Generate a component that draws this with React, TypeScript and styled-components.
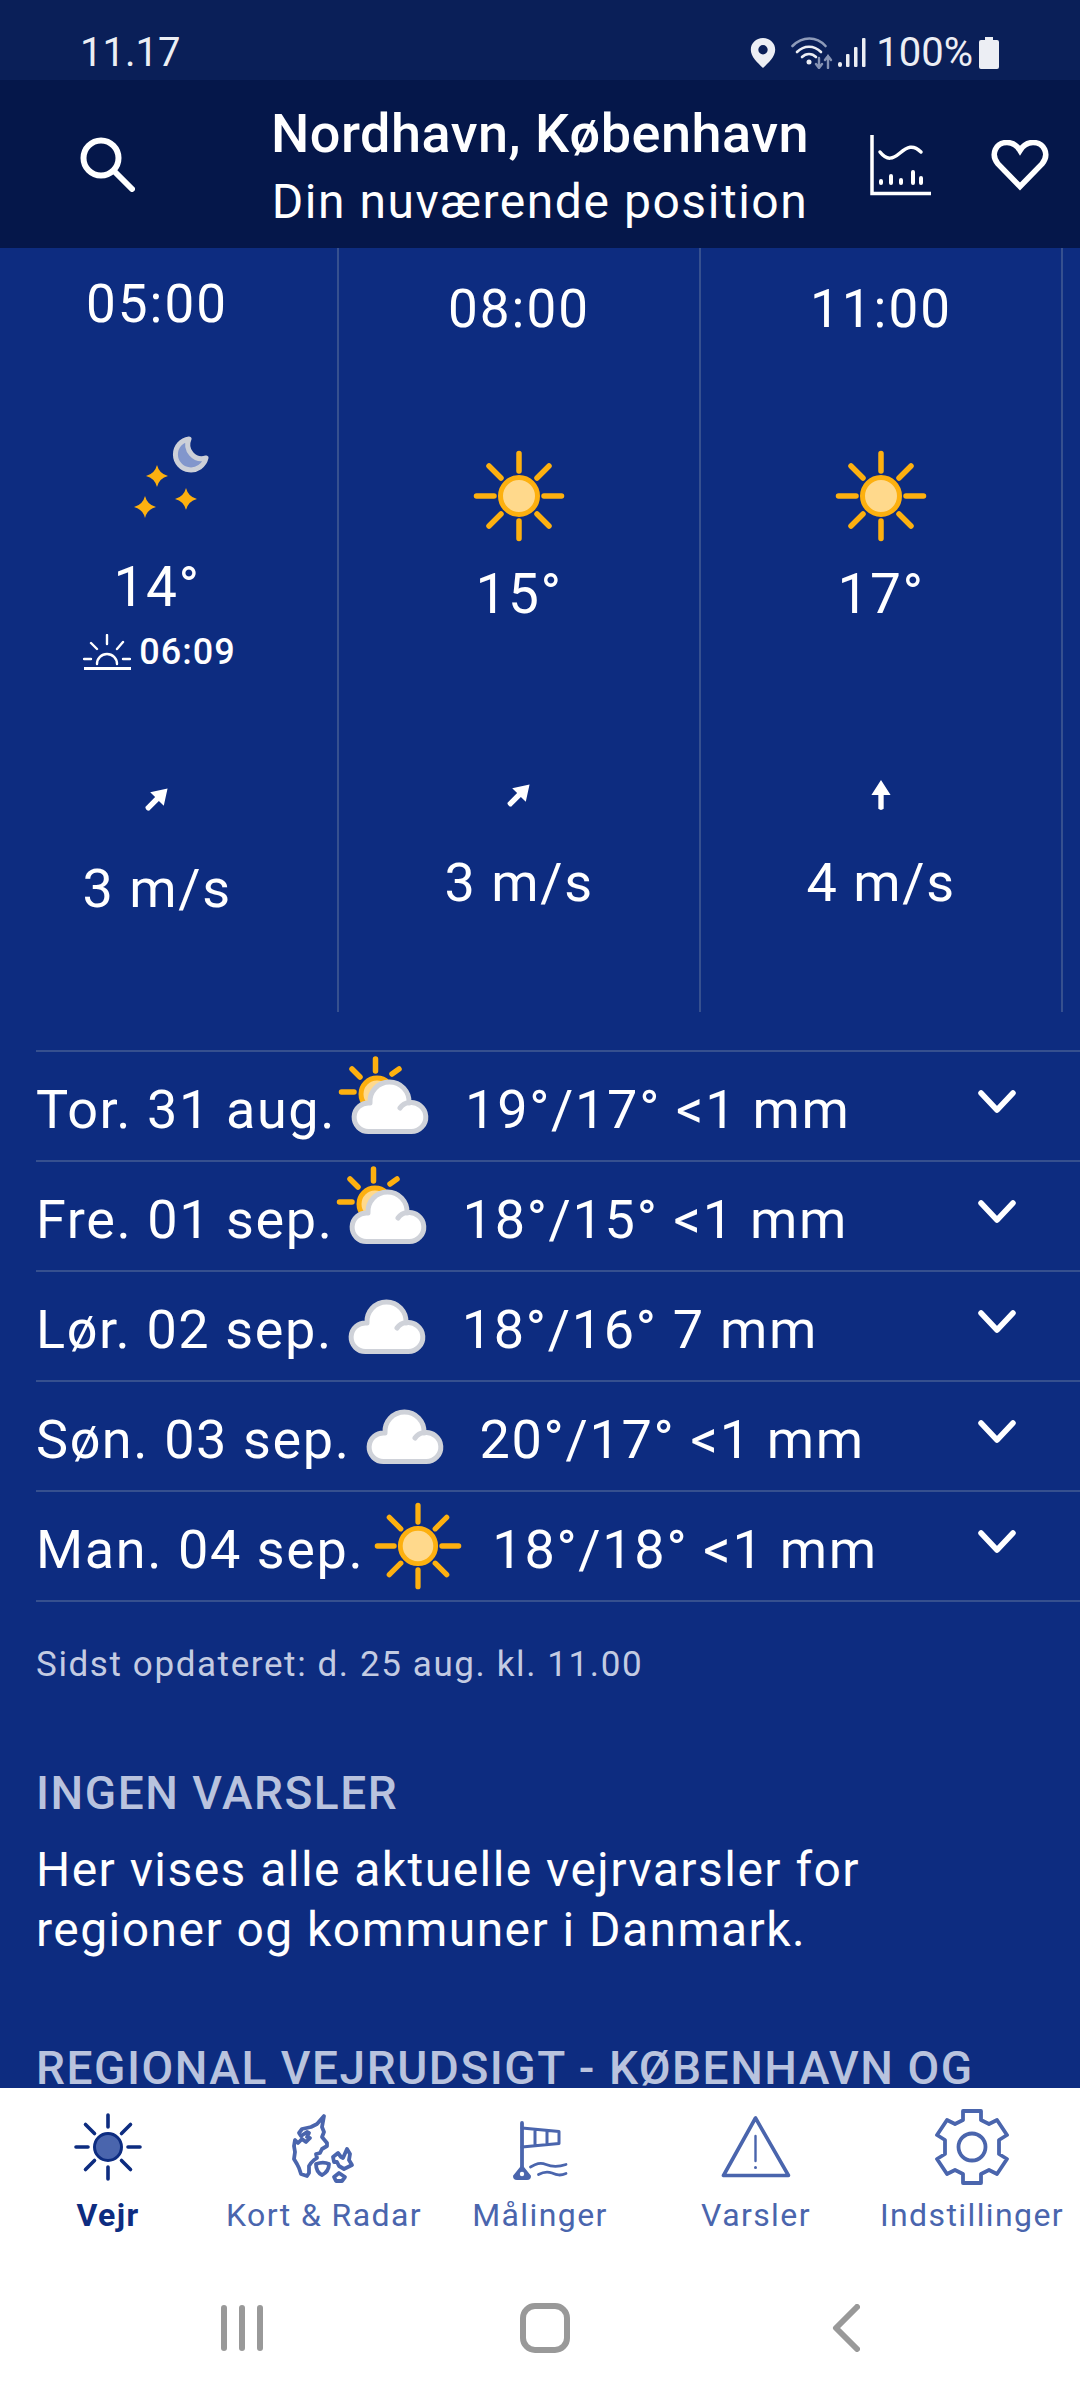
import React from "react";
import styled, { createGlobalStyle } from "styled-components";

const Global = createGlobalStyle`
  html, body { margin: 0; padding: 0; background: #0d2c80; }
  #root { width: 1080px; height: 2400px; overflow: hidden; }
  * { box-sizing: border-box; }
`;

const Page = styled.div`
  width: 1080px;
  height: 2400px;
  display: flex;
  flex-direction: column;
  background: #0d2c80;
  color: #fff;
  font-family: Roboto, "Liberation Sans", sans-serif;
  overflow: hidden;
`;

const StatusBar = styled.div`
  height: 80px;
  flex: none;
  background: #0a1f58;
  display: flex;
  align-items: center;
  padding: 25px 81px 0 80px;
  color: #eceef4;
  font-size: 40px;
  letter-spacing: 0;
`;

const StatusRight = styled.div`
  margin-left: auto;
  display: flex;
  align-items: center;
`;

const StatusPercent = styled.span`
  margin-left: 10px;
  letter-spacing: 0;
  font-size: 40px;
`;

const Header = styled.header`
  height: 168px;
  flex: none;
  background: #05174a;
  display: flex;
  align-items: center;
`;

const SearchSlot = styled.div`
  width: 240px;
  padding-left: 79px;
  flex: none;
  display: flex;
`;

const HeaderTitles = styled.div`
  width: 600px;
  padding-top: 9px;
  text-align: center;
  flex: none;
`;

const Title = styled.div`
  font-size: 54px;
  font-weight: 500;
  line-height: 64px;
  letter-spacing: 0.5px;
  white-space: nowrap;
`;

const Subtitle = styled.div`
  margin-top: 3px;
  font-size: 48px;
  line-height: 66px;
  letter-spacing: 1.55px;
  white-space: nowrap;
`;

const HeaderIcons = styled.div`
  display: flex;
  align-items: center;
  margin-left: 29px;
  padding-top: 4px;
  gap: 60px;
`;

const Main = styled.main`
  flex: 1;
  min-height: 0;
  overflow: hidden;
`;

const HourStrip = styled.section`
  display: flex;
  height: 764px;
  margin-left: -23px;
`;

const HourColumn = styled.div<{ $first?: boolean }>`
  flex: none;
  width: 362px;
  border-right: 2px solid #36508f;
  display: flex;
  flex-direction: column;
  align-items: center;
  padding-top: ${(p) => (p.$first ? 29 : 34)}px;
`;

const HourTime = styled.div`
  font-size: 53px;
  line-height: 54px;
  letter-spacing: 2px;
`;

const IconSlot = styled.div<{ $first?: boolean }>`
  margin-top: ${(p) => (p.$first ? 100 : 111)}px;
  margin-left: ${(p) => (p.$first ? 30 : 0)}px;
  height: 98px;
  display: flex;
  align-items: center;
  justify-content: center;
`;

const Temp = styled.div<{ $first?: boolean }>`
  margin-top: ${(p) => (p.$first ? 27 : 18)}px;
  font-size: 55px;
  line-height: 62px;
  letter-spacing: 1.5px;
`;

const SunriseRow = styled.div`
  margin-top: 10px;
  margin-left: 5px;
  height: 48px;
  display: flex;
  align-items: center;
  gap: 8px;
  font-size: 36px;
  font-weight: 500;
  letter-spacing: 1px;
`;

const WindArrow = styled.div<{ $first?: boolean }>`
  margin-top: ${(p) => (p.$first ? 107 : 154)}px;
  height: 32px;
  display: flex;
  align-items: center;
  justify-content: center;
`;

const WindHead = styled.svg<{ $rotate: number }>`
  transform: rotate(${(p) => p.$rotate}deg);
`;

const WindText = styled.div<{ $first?: boolean }>`
  margin-top: ${(p) => (p.$first ? 43 : 41)}px;
  font-size: 54px;
  line-height: 62px;
  letter-spacing: 1.6px;
`;

const DayList = styled.section`
  margin: 0 0 0 36px;
  padding-top: 38px;
`;

const DayRow = styled.div<{ $last?: boolean }>`
  height: ${(p) => (p.$last ? 112 : 110)}px;
  padding-top: 6px;
  border-top: 2px solid #36508f;
  ${(p) => (p.$last ? "border-bottom: 2px solid #36508f;" : "")}
  display: flex;
  align-items: center;
  font-size: 54px;
  letter-spacing: 1.7px;
  white-space: nowrap;
`;

const DayName = styled.span`
  flex: none;
  letter-spacing: 1.6px;
`;

const DayIcon = styled.span<{ $gap: number; $right: number; $lift: number }>`
  display: flex;
  flex: none;
  margin: ${(p) => -p.$lift}px ${(p) => p.$right}px 0 ${(p) => p.$gap}px;
`;

const DayValues = styled.span`
  flex: none;
`;

const Chevron = styled.span`
  margin-left: auto;
  margin-right: 64px;
  margin-top: -14px;
  display: flex;
`;

const Updated = styled.div`
  padding: 41px 36px 0;
  font-size: 35px;
  line-height: 44px;
  letter-spacing: 1.6px;
  color: #c3cbe2;
`;

const SectionHead = styled.h2<{ $top: number }>`
  margin: ${(p) => p.$top}px 0 0;
  padding: 0 36px;
  font-size: 46px;
  font-weight: 500;
  line-height: 52px;
  letter-spacing: 1.55px;
  color: #b9c3de;
  white-space: nowrap;
`;

const Body = styled.p`
  margin: 21px 0 0;
  padding: 0 36px;
  font-size: 48px;
  line-height: 60px;
  letter-spacing: 1.45px;
`;

const TabBar = styled.nav`
  flex: none;
  height: 168px;
  background: #fff;
  display: grid;
  grid-template-columns: repeat(5, 216px);
  padding-top: 17px;
`;

const Tab = styled.div<{ $active?: boolean }>`
  display: flex;
  flex-direction: column;
  align-items: center;
  color: ${(p) => (p.$active ? "#0d2c80" : "#4a65ad")};
  font-size: 32px;
  font-weight: ${(p) => (p.$active ? 700 : 400)};
  letter-spacing: 1.4px;
  white-space: nowrap;
`;

const TabIcon = styled.div`
  height: 84px;
  display: flex;
  align-items: center;
  justify-content: center;
`;

const TabLabel = styled.div`
  margin-top: 6px;
  line-height: 40px;
`;

const SystemBar = styled.div`
  flex: none;
  height: 144px;
  background: #fff;
  display: grid;
  grid-template-columns: repeat(3, 298px);
  align-items: center;
  padding-left: 93px;
`;

const SysSlot = styled.div<{ $nudge?: number }>`
  display: flex;
  justify-content: center;
  padding-left: ${(p) => p.$nudge ?? 0}px;
`;

const WifiSvg = styled.svg`
  margin-left: 15px;
`;

const SignalSvg = styled.svg`
  margin-left: 5px;
`;

const BatterySvg = styled.svg`
  margin-left: 6px;
`;

const Sun = ({ size = 92 }: { size?: number }) => (
  <svg width={size} height={size} viewBox="0 0 92 92" fill="none">
    <g stroke="#fdb00f" strokeWidth="5.5" strokeLinecap="round">
      <path d="M46 3.500V21M46 71v17.500M3.500 46H21M71 46h17.500M16 16l12 12M64 64l12 12M16 76l12-12M64 28l12-12" />
    </g>
    <circle cx="46" cy="46" r="18.5" fill="#ffd98c" stroke="#fdb00f" strokeWidth="5" />
  </svg>
);

const Cloud = ({ sun }: { sun?: boolean }) => (
  <svg width="96" height="84" viewBox="0 0 96 84" fill="none">
    {sun && (
      <g>
        <path d="M39.500 3v12M5.500 36h12.500M16 13l8 8M56 18l7-5" stroke="#fdb00f" strokeWidth="5.500" strokeLinecap="round" />
        <circle cx="41" cy="38" r="16" fill="#ffd98c" stroke="#fdb00f" strokeWidth="5" />
      </g>
    )}
    <path
      d="M33 75.500H75A14.450 14.450 0 1 0 73 46.800A19.550 19.550 0 1 0 34 47A14.300 14.300 0 1 0 33 75.500Z"
      fill="#fff"
      stroke="#cfd2d9"
      strokeWidth="5"
      strokeLinejoin="round"
    />
    <path d="M64 52c2-3 5-5 9-5.200" stroke="#cfd2d9" strokeWidth="5" strokeLinecap="round" />
  </svg>
);

const Star = ({ x, y, r }: { x: number; y: number; r: number }) => (
  <path
    d={`M${x} ${y - r}Q${x + r * 0.2} ${y - r * 0.2} ${x + r} ${y}Q${x + r * 0.2} ${y + r * 0.2} ${x} ${y + r}Q${x - r * 0.2} ${y + r * 0.2} ${x - r} ${y}Q${x - r * 0.2} ${y - r * 0.2} ${x} ${y - r}Z`}
    fill="#fdb00f"
  />
);

const Night = () => (
  <svg width="84" height="88" viewBox="0 0 84 88" fill="none">
    <path
      d="M59 3A15.500 15.500 0 1 0 76 22A14 14 0 0 1 59 3Z"
      fill="#8296cc"
      stroke="#cdd0d8"
      strokeWidth="5"
      strokeLinejoin="round"
    />
    <Star x={27} y={40} r={11} />
    <Star x={15} y={71} r={11} />
    <Star x={56} y={63} r={11} />
  </svg>
);

const Sunrise = () => (
  <svg width="48" height="36" viewBox="0 0 48 36" fill="none" stroke="#fff" strokeWidth="2.400" strokeLinecap="round">
    <path d="M1 34.500h47" strokeWidth="2.800" strokeLinecap="butt" />
    <path d="M14 30a10 10 0 0 1 20 0" />
    <path d="M24 1v9M8 9l6 6M40 8l-6 7M1 25h7M40 25h7" />
  </svg>
);

const Arrow = ({ rotate }: { rotate: number }) => (
  <WindHead $rotate={rotate} width="32" height="32" viewBox="0 0 30 30">
    <path d="M15 1L24 15H17.500V28Q15 30 12.500 28V15H6Z" fill="#fff" />
  </WindHead>
);

const ChevronIcon = () => (
  <svg width="38" height="26" viewBox="0 0 38 26" fill="none" stroke="#fff" strokeWidth="5.500" strokeLinecap="round" strokeLinejoin="round">
    <path d="M3 4l16 17L35 4" />
  </svg>
);

const SearchIcon = () => (
  <svg width="56" height="56" viewBox="0 0 56 56" fill="none" stroke="#fff" strokeWidth="6">
    <circle cx="22" cy="22" r="17.500" />
    <path d="M35 35l18 18" strokeLinecap="round" />
  </svg>
);

const ChartIcon = () => (
  <svg width="62" height="62" viewBox="0 0 62 62" fill="none" stroke="#fff">
    <path d="M3 0v58.500h59" strokeWidth="3.500" />
    <path d="M11 17c7 9 13 7 20 1s13-9 21-1" strokeWidth="3.500" strokeLinecap="round" />
    <path d="M12 46v2M22 41v7M32 45v3M44 37v11M52 43v5" strokeWidth="4" strokeLinecap="round" />
  </svg>
);

const HeartIcon = () => (
  <svg width="58" height="52" viewBox="0 1 58 52" fill="none" stroke="#fff" strokeWidth="5.500" strokeLinejoin="miter">
    <path d="M29 47.500L7 25C-1 15 5 3.500 16 3.500c6 0 10 3 13 8 3-5 7-8 13-8 11 0 17 11.500 9 21.500Z" />
  </svg>
);

const PinIcon = () => (
  <svg width="26" height="30" viewBox="0 0 26 32">
    <path fillRule="evenodd" fill="#eceef4" d="M13 0C5.500 0 0 5.500 0 12.500 0 20 7 26 13 32c6-6 13-12 13-19.500C26 5.500 20.500 0 13 0ZM13 7.500a5 5 0 1 1 0 10 5 5 0 0 1 0-10Z" />
  </svg>
);

const WifiIcon = () => (
  <WifiSvg width="42" height="32" viewBox="0 0 42 32" fill="none" strokeLinecap="round">
    <path d="M1.500 9c10-10 24-10 33 0" stroke="#8e9bb9" strokeWidth="2.600" />
    <path d="M6 15c7-7 17-7 24 0" stroke="#eceef4" strokeWidth="2.600" />
    <path d="M11 20c4-4 10-4 14 0" stroke="#eceef4" strokeWidth="2.600" />
    <circle cx="18" cy="25" r="2.500" fill="#eceef4" />
    <path d="M28 21v10M25 27l3 4 3-4" stroke="#8592b3" strokeWidth="2.400" />
    <path d="M37 31V19M34 23l3-4 3 4" stroke="#8592b3" strokeWidth="2.400" />
  </WifiSvg>
);

const SignalIcon = () => (
  <SignalSvg width="28" height="30" viewBox="0 0 28 30">
    <g fill="#eceef4">
      <rect x="0" y="24" width="4" height="5" rx="2" />
      <rect x="8" y="16" width="3.500" height="13" rx="1" />
      <rect x="16" y="9" width="3.500" height="20" rx="1" />
      <rect x="24" y="0" width="3.500" height="29" rx="1" />
    </g>
  </SignalSvg>
);

const BatteryIcon = () => (
  <BatterySvg width="20" height="32" viewBox="0 0 20 32">
    <path fill="#eceef4" d="M6 0h8v3h4q2 0 2 2v25q0 2-2 2H2q-2 0-2-2V5q0-2 2-2h4Z" />
  </BatterySvg>
);

const TabSun = () => (
  <svg width="68" height="68" viewBox="0 0 68 68" fill="none">
    <g stroke="#0d2c80" strokeWidth="3.600" strokeLinecap="round">
      <path d="M34 2v12M34 54v12M2 34h12M54 34h12M11.500 11.500l9 9M47.500 47.500l9 9M11.500 56.500l9-9M47.500 20.500l9-9" />
    </g>
    <circle cx="34" cy="34" r="13.500" fill="#4a65ad" stroke="#0d2c80" strokeWidth="3" />
  </svg>
);

const MapIcon = () => (
  <svg width="90" height="84" viewBox="0 3 90 84" fill="none" stroke="#4a65ad" strokeWidth="3.800" strokeLinejoin="round" strokeLinecap="round">
    <path d="M45 14L38 22 32 25 23 27 20 31 22 34 28 30 30 31 28 35 31 36 27 40 23 37 19 41 16 38 15 44 16 50 15 57 18 62 20 66 22 72 28 74 30 71 30 64 32 61 35 58 38 56 37 52 41 51 43 47 48 44 48 41 43 35 45 30 43 25Z" />
    <path d="M37 62C42 60 46 60 50 62 50 67 47 71 43 73 39 71 37 67 37 62Z" />
    <path d="M54 55L59 51 62 55 64 56 68 47 71 52 70 58 73 63 65 67 60 64 58 60 55 60Z" />
    <path d="M55 75L60 71 66 75 63 79 57 79Z" />
  </svg>
);

const FlagIcon = () => (
  <svg width="90" height="84" viewBox="-5 3 90 84" fill="none" stroke="#4a65ad" strokeLinecap="round" strokeLinejoin="round">
    <path d="M22 21V68" strokeWidth="3.800" />
    <path d="M22 26L59 29.500V41.500L22 45M35 27.500V43.500M47 28.500V42.500" strokeWidth="3" />
    <path d="M22 64L14 74Q14 77 17 77H27Q30 77 30 74Z" fill="#4a65ad" strokeWidth="2" />
    <circle cx="22" cy="72" r="2.200" fill="#fff" stroke="none" />
    <path d="M30.500 65C36 62 40 60 46 62.500S57 65.500 66 62.500M38.500 72.500C43 70 47 69 52 71S60 74 66 71.500" strokeWidth="2.800" />
  </svg>
);

const WarnIcon = () => (
  <svg width="70" height="64" viewBox="0 0 70 64" fill="none" stroke="#4a65ad" strokeLinejoin="round" strokeLinecap="round">
    <path d="M34.500 3L2.500 60.500h65Z" strokeWidth="3.600" />
    <path d="M34.500 21v25" strokeWidth="2.400" />
    <circle cx="34.500" cy="52.500" r="1.500" fill="#4a65ad" stroke="none" />
  </svg>
);

const GearIcon = () => (
  <svg width="74" height="76" viewBox="0 0 74 76" fill="none" stroke="#4a65ad" strokeWidth="3.800" strokeLinejoin="round">
    <circle cx="37" cy="38" r="13.500" />
    <path d="M28 2h18v9l8 4 8-4 10 15-8 5v14l8 5-10 15-8-4-8 4v9H28v-9l-8-4-8 4L2 50l8-5V31l-8-5 10-15 8 4 8-4Z" />
  </svg>
);

const hours = [
  { time: "08:00", temp: "15°", rot: 45, wind: "3 m/s" },
  { time: "11:00", temp: "17°", rot: 0, wind: "4 m/s" },
];

const days = [
  { name: "Tor. 31 aug.", icon: <Cloud sun />, gap: 0, right: 33, lift: 22, values: "19°/17° <1 mm" },
  { name: "Fre. 01 sep.", icon: <Cloud sun />, gap: 0, right: 33, lift: 22, values: "18°/15° <1 mm" },
  { name: "Lør. 02 sep.", icon: <Cloud />, gap: 0, right: 33, lift: 22, values: "18°/16° 7 mm" },
  { name: "Søn. 03 sep.", icon: <Cloud />, gap: 0, right: 33, lift: 22, values: "20°/17° <1 mm" },
  { name: "Man. 04 sep.", icon: <Sun size={88} />, gap: 10, right: 30, lift: 6, values: "18°/18° <1 mm" },
];

const tabs = [
  { label: "Vejr", icon: <TabSun />, active: true },
  { label: "Kort & Radar", icon: <MapIcon /> },
  { label: "Målinger", icon: <FlagIcon /> },
  { label: "Varsler", icon: <WarnIcon /> },
  { label: "Indstillinger", icon: <GearIcon /> },
];

export default function App() {
  return (
    <Page>
      <Global />
      <StatusBar>
        11.17
        <StatusRight>
          <PinIcon />
          <WifiIcon />
          <SignalIcon />
          <StatusPercent>100%</StatusPercent>
          <BatteryIcon />
        </StatusRight>
      </StatusBar>
      <Header>
        <SearchSlot>
          <SearchIcon />
        </SearchSlot>
        <HeaderTitles>
          <Title>Nordhavn, København</Title>
          <Subtitle>Din nuværende position</Subtitle>
        </HeaderTitles>
        <HeaderIcons>
          <ChartIcon />
          <HeartIcon />
        </HeaderIcons>
      </Header>
      <Main>
        <HourStrip>
          <HourColumn $first>
            <HourTime>05:00</HourTime>
            <IconSlot $first>
              <Night />
            </IconSlot>
            <Temp $first>14°</Temp>
            <SunriseRow>
              <Sunrise />
              06:09
            </SunriseRow>
            <WindArrow $first>
              <Arrow rotate={45} />
            </WindArrow>
            <WindText $first>3 m/s</WindText>
          </HourColumn>
          {hours.map((h) => (
            <HourColumn key={h.time}>
              <HourTime>{h.time}</HourTime>
              <IconSlot>
                <Sun />
              </IconSlot>
              <Temp>{h.temp}</Temp>
              <WindArrow>
                <Arrow rotate={h.rot} />
              </WindArrow>
              <WindText>{h.wind}</WindText>
            </HourColumn>
          ))}
        </HourStrip>
        <DayList>
          {days.map((d, i) => (
            <DayRow key={d.name} $last={i === days.length - 1}>
              <DayName>{d.name}</DayName>
              <DayIcon $gap={d.gap} $right={d.right} $lift={d.lift}>
                {d.icon}
              </DayIcon>
              <DayValues>{d.values}</DayValues>
              <Chevron>
                <ChevronIcon />
              </Chevron>
            </DayRow>
          ))}
        </DayList>
        <Updated>Sidst opdateret: d. 25 aug. kl. 11.00</Updated>
        <SectionHead $top={80}>INGEN VARSLER</SectionHead>
        <Body>
          Her vises alle aktuelle vejrvarsler for
          <br />
          regioner og kommuner i Danmark.
        </Body>
        <SectionHead $top={82}>REGIONAL VEJRUDSIGT - KØBENHAVN OG</SectionHead>
      </Main>
      <TabBar>
        {tabs.map((t) => (
          <Tab key={t.label} $active={t.active}>
            <TabIcon>{t.icon}</TabIcon>
            <TabLabel>{t.label}</TabLabel>
          </Tab>
        ))}
      </TabBar>
      <SystemBar>
        <SysSlot>
          <svg width="42" height="48" viewBox="0 0 42 48" fill="#999">
            <rect x="0" y="1" width="6" height="46" rx="3" />
            <rect x="18" y="1" width="6" height="46" rx="3" />
            <rect x="36" y="1" width="6" height="46" rx="3" />
          </svg>
        </SysSlot>
        <SysSlot $nudge={9}>
          <svg width="50" height="50" viewBox="0 0 50 50" fill="none" stroke="#999" strokeWidth="6">
            <rect x="3" y="3" width="44" height="44" rx="12" />
          </svg>
        </SysSlot>
        <SysSlot $nudge={16}>
          <svg width="28" height="48" viewBox="0 0 28 48" fill="none" stroke="#999" strokeWidth="6" strokeLinecap="round" strokeLinejoin="round">
            <path d="M25 3L4 24l21 21" />
          </svg>
        </SysSlot>
      </SystemBar>
    </Page>
  );
}
